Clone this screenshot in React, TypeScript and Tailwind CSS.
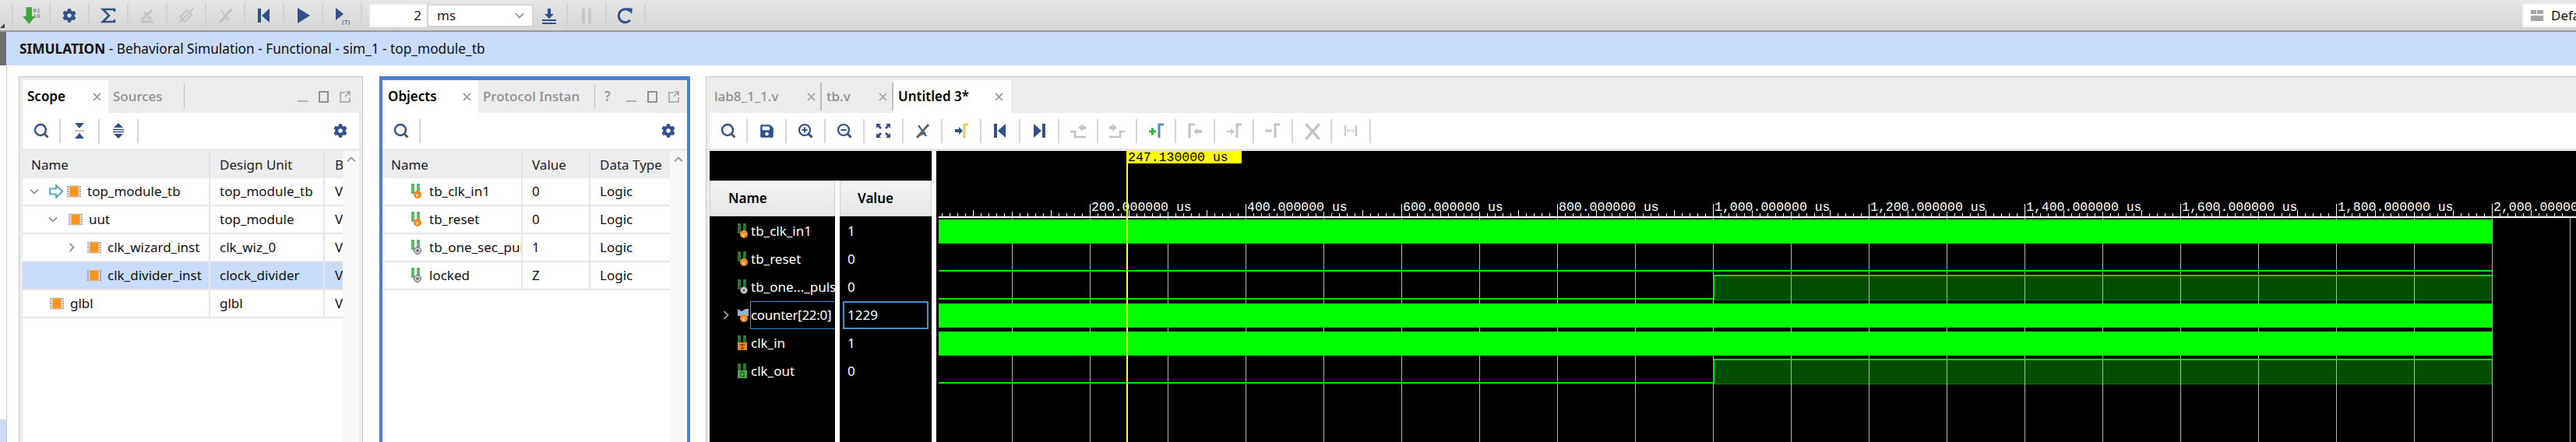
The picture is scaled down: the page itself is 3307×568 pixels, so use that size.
import * as React from "react"
import { FaCog, FaSave } from "react-icons/fa"

const NAVY = "#2f5187"
const GREY = "#c4c4c4"

const Svg = ({ size = 24, children }: { size?: number; children: React.ReactNode }) => (
  <svg width={size} height={size} viewBox="0 0 24 24" fill="none">
    {children}
  </svg>
)

const SearchIcon = () => (
  <Svg>
    <circle cx="11" cy="11" r="7" stroke={NAVY} strokeWidth="2.4" />
    <path d="M16 16l4.5 4.5" stroke="#555" strokeWidth="3" />
  </Svg>
)
const ZoomIcon = ({ plus }: { plus?: boolean }) => (
  <Svg>
    <circle cx="11" cy="11" r="7" stroke={NAVY} strokeWidth="2.2" />
    <path d={plus ? "M7.5 11h7M11 7.5v7" : "M7.5 11h7"} stroke={NAVY} strokeWidth="2" />
    <path d="M16 16l4.5 4.5" stroke={NAVY} strokeWidth="3" />
  </Svg>
)
const FitIcon = () => (
  <Svg>
    <path d="M3 3h6l-2 2 3 3-2 2-3-3-2 2zM21 3h-6l2 2-3 3 2 2 3-3 2 2zM3 21h6l-2-2 3-3-2-2-3 3-2-2zM21 21h-6l2-2-3-3 2-2 3 3 2-2z" fill={NAVY} />
  </Svg>
)
const SlashMarkerIcon = ({ color = NAVY, slash = "#666" }: { color?: string; slash?: string }) => (
  <Svg>
    <path d="M7 5l10 14M7 19l9-5" stroke={color} strokeWidth="2" />
    <path d="M5 21L20 4" stroke={slash} strokeWidth="3" />
  </Svg>
)
const PrevIcon = ({ flip }: { flip?: boolean }) => (
  <Svg>
    <g transform={flip ? "matrix(-1 0 0 1 24 0)" : undefined}>
      <rect x="4" y="3" width="4" height="18" fill={NAVY} />
      <path d="M19 3v18L9 12z" fill={NAVY} />
    </g>
  </Svg>
)
const PlayIcon = () => (
  <Svg>
    <path d="M5 2v20l16-10z" fill={NAVY} />
  </Svg>
)
const PlayTIcon = () => (
  <Svg>
    <path d="M4 2v16l10-8z" fill={NAVY} />
    <text x="12" y="23" fontSize="8" fill="#444" className="[font-family:'Liberation_Sans',sans-serif]">(T)</text>
  </Svg>
)
const SigmaIcon = () => (
  <Svg>
    <path d="M20 7V4H5l8 8-8 8h15v-3" stroke={NAVY} strokeWidth="2.6" />
  </Svg>
)
const RunLoadIcon = () => (
  <Svg size={26}>
    <path d="M6 2h7v11h4l-7.5 9L2 13h4z" fill="#3fa63f" />
    <text x="14" y="8" fontSize="7.5" fill="#666" className="[font-family:'Liberation_Mono',monospace]">01</text>
    <text x="14" y="15" fontSize="7.5" fill="#666" className="[font-family:'Liberation_Mono',monospace]">10</text>
  </Svg>
)
const WedgeIcon = () => (
  <Svg>
    <path d="M4 20h16M5 17L18 5M8 8l9 9" stroke={GREY} strokeWidth="3" />
  </Svg>
)
const PillIcon = () => (
  <Svg>
    <path d="M4 14l9-9 6 6-9 9z" stroke={GREY} strokeWidth="2" />
    <path d="M3 21L21 3" stroke={GREY} strokeWidth="2" />
  </Svg>
)
const CursorIcon = () => (
  <Svg>
    <path d="M4 10h5V7l5 5-5 5v-3H4z" fill={NAVY} />
    <path d="M21 4h-5v17" stroke="#e8ca62" strokeWidth="3" />
  </Svg>
)
const TransitionIcon = ({ flip }: { flip?: boolean }) => (
  <Svg>
    <g transform={flip ? "matrix(-1 0 0 1 24 0)" : undefined}>
      <path d="M2 13h6v7h14" stroke={GREY} strokeWidth="2.6" />
      <path d="M12 8l6-5v3h4v4h-4v3z" fill={GREY} />
    </g>
  </Svg>
)
const MarkerAddIcon = () => (
  <Svg>
    <path d="M3 13h9M7.5 8.5v9" stroke="#3fae49" strokeWidth="3" />
    <path d="M22 4h-6v17" stroke="#4a8ec2" strokeWidth="3" />
  </Svg>
)
const MarkerPrevIcon = () => (
  <Svg>
    <path d="M12 4H5v17" stroke={GREY} strokeWidth="3" />
    <path d="M10 13l5-4v2h6v4h-6v2z" fill={GREY} />
  </Svg>
)
const MarkerNextIcon = () => (
  <Svg>
    <path d="M3 12h5V9l5 4-5 4v-3H3z" fill={GREY} />
    <path d="M22 4h-6v17" stroke={GREY} strokeWidth="3" />
  </Svg>
)
const MarkerDelIcon = () => (
  <Svg>
    <path d="M2 12h9" stroke={GREY} strokeWidth="3" />
    <path d="M21 4h-6v17" stroke={GREY} strokeWidth="3" />
  </Svg>
)
const CrossIcon = () => (
  <Svg size={26}>
    <path d="M5 4l16 18M21 4L5 22" stroke={GREY} strokeWidth="3.2" />
  </Svg>
)
const SpanIcon = () => (
  <Svg>
    <path d="M5 5v14M19 5v14" stroke={GREY} strokeWidth="2" />
    <path d="M7 12h10M9 10l-2 2 2 2M15 10l2 2-2 2" stroke={GREY} strokeWidth="1" />
  </Svg>
)
const ExpandIcon = () => (
  <Svg>
    <path d="M6 2h12l-6 7zM12 15l6 7H6z" fill={NAVY} />
    <path d="M6 12h12" stroke={GREY} strokeWidth="2" />
  </Svg>
)
const CollapseIcon = () => (
  <Svg>
    <path d="M12 2l6 6H6zM6 16h12l-6 6z" fill={NAVY} />
    <path d="M5 10.5h14M5 13.5h14" stroke={NAVY} strokeWidth="1.6" />
  </Svg>
)
const RunAllIcon = () => (
  <Svg>
    <path d="M10 3h4v7h4l-6 6-6-6h4z" fill={NAVY} />
    <path d="M3 18h18M3 22h18" stroke={NAVY} strokeWidth="2" />
  </Svg>
)
const PauseIcon = () => (
  <Svg>
    <path d="M8 3v19M16 3v19" stroke={GREY} strokeWidth="3.5" />
  </Svg>
)
const RefreshIcon = () => (
  <Svg>
    <path d="M18 6.5A8.5 8.5 0 1 0 18 18" stroke={NAVY} strokeWidth="3" />
    <path d="M14 2l7 1-1 7z" fill={NAVY} />
  </Svg>
)
const LayoutIcon = () => (
  <svg width="16" height="14" viewBox="0 0 16 14">
    <path d="M0 0h7v5H0zM8 0h8v5H8zM0 7h16v7H0z" fill="#a6a6a6" />
  </svg>
)
const Chevron = ({ dir, className }: { dir: "up" | "down" | "right"; className?: string }) => (
  <svg width="14" height="14" viewBox="0 0 14 14" fill="none" className={className}>
    <path
      d={dir === "down" ? "M2 4.5l5 5 5-5" : dir === "up" ? "M2 9.5l5-5 5 5" : "M4.5 2l5 5-5 5"}
      stroke="#9a9a9a"
      strokeWidth="1.8"
    />
  </svg>
)
const ChipIcon = () => (
  <svg width="18" height="18" viewBox="0 0 18 18">
    <path d="M0 3h2M0 6h2M0 9h2M0 12h2M0 15h2M16 3h2M16 6h2M16 9h2M16 12h2M16 15h2" stroke="#555" strokeWidth="1" />
    <rect x="2" y="1" width="14" height="16" fill="#d9d9d9" />
    <rect x="3.5" y="2.5" width="11" height="13" fill="#f7941d" />
  </svg>
)
const ArrowIcon = () => (
  <svg width="18" height="18" viewBox="0 0 18 18">
    <path d="M1 5.5h8V1l8 8-8 8v-4.5H1z" fill="#fff" stroke="#5ba4c4" strokeWidth="2" />
  </svg>
)
const MinimiseIcon = () => <span className="mt-[12px] h-[2px] w-[13px] bg-[#b0b0b0]" />
const BoxIcon = () => <span className="h-[15px] w-[13px] border-2 border-[#8f8f8f]" />
const PopIcon = () => (
  <svg width="14" height="15" viewBox="0 0 14 15" fill="none">
    <path d="M7 2H1v12h12V8M8 1h5v5M13 1L7 7" stroke="#a0a0a0" strokeWidth="1.5" />
  </svg>
)

type SigKind = "in" | "plain" | "bus" | "clkin" | "clkout"

// little green wave plus the type badge in front of each signal
const SignalIcon = ({ kind }: { kind: SigKind }) => (
  <svg width="16" height="22" viewBox="0 0 16 22" fill="none">
    {kind === "bus" ? (
      <path d="M1 3l5 3 5-3 4 0v9H1z" fill="#8db8d8" />
    ) : (
      <path d="M2 14V2h2v12M9 14V2h2v10" stroke="#2f9e44" strokeWidth="1.5" />
    )}
    {kind === "in" || kind === "bus" ? (
      <>
        <circle cx="9" cy="15" r="5" fill="#f08a1d" />
        <text x="6.8" y="17.5" fontSize="7" fill="#fff" className="[font-family:'Liberation_Sans',sans-serif]">v</text>
      </>
    ) : null}
    {kind === "plain" ? (
      <>
        <circle cx="9" cy="15" r="4.5" fill="#c8c8c8" stroke="#666" />
        <circle cx="9" cy="15" r="1.5" fill="#555" />
      </>
    ) : null}
    {kind === "clkin" ? (
      <>
        <rect x="1" y="10" width="12" height="10" fill="#e8851c" />
        <path d="M4 13h6M7 13v5M5 18h4" stroke="#3d2a10" strokeWidth="1" />
      </>
    ) : null}
    {kind === "clkout" ? (
      <>
        <rect x="1" y="10" width="12" height="10" fill="#4aa84a" />
        <rect x="5" y="12.5" width="4" height="5" stroke="#1d4f1d" strokeWidth="1" />
      </>
    ) : null}
  </svg>
)

const ToolCell = ({ children, first, faint }: { children?: React.ReactNode; first?: boolean; faint?: boolean }) => (
  <div
    className={
      "flex h-[31px] w-[50px] shrink-0 items-center justify-center border-r-2 " +
      (faint ? "border-[#d2d2d2] " : "border-[#d6d6d6] ") +
      (first ? "border-l-2 " : "")
    }
  >
    {children}
  </div>
)

const treeRows = [
  { name: "top_module_tb", unit: "top_module_tb", pad: "pl-[8px]", chevron: "down" as const, arrow: true },
  { name: "uut", unit: "top_module", pad: "pl-[32px]", chevron: "down" as const },
  { name: "clk_wizard_inst", unit: "clk_wiz_0", pad: "pl-[56px]", chevron: "right" as const },
  { name: "clk_divider_inst", unit: "clock_divider", pad: "pl-[56px]", selected: true },
  { name: "glbl", unit: "glbl", pad: "pl-[8px]" },
]

const objectRows: { name: string; value: string; kind: SigKind }[] = [
  { name: "tb_clk_in1", value: "0", kind: "in" },
  { name: "tb_reset", value: "0", kind: "in" },
  { name: "tb_one_sec_pulse", value: "1", kind: "plain" },
  { name: "locked", value: "Z", kind: "plain" },
]

const waveRows: { name: string; value: string; kind: SigKind; chevron?: boolean; selected?: boolean }[] = [
  { name: "tb_clk_in1", value: "1", kind: "in" },
  { name: "tb_reset", value: "0", kind: "in" },
  { name: "tb_one..._pulse", value: "0", kind: "plain" },
  { name: "counter[22:0]", value: "1229", kind: "bus", chevron: true, selected: true },
  { name: "clk_in", value: "1", kind: "clkin" },
  { name: "clk_out", value: "0", kind: "clkout" },
]

const Tab = ({ children, active, className }: { children: React.ReactNode; active?: boolean; className?: string }) => (
  <div
    className={
      "flex h-full shrink-0 items-center text-[17px] " +
      (active ? "bg-white font-semibold text-black " : "font-medium text-[#8f8f8f] ") +
      (className ?? "")
    }
  >
    {children}
  </div>
)

const CloseX = ({ active }: { active?: boolean }) => (
  <svg width="11" height="11" viewBox="0 0 11 11" className="shrink-0">
    <path d="M1 1l9 9M10 1l-9 9" stroke={active ? "#8a8a8a" : "#9a9a9a"} strokeWidth="1.5" />
  </svg>
)

const HeadCell = ({ className, children }: { className: string; children: React.ReactNode }) => (
  <div className={"flex h-full items-center overflow-hidden whitespace-nowrap border-r-2 border-[#e2e2e2] " + className}>
    {children}
  </div>
)

const ScopePanel = () => (
  <section className="mt-[14px] flex w-[442px] shrink-0 flex-col border border-b-0 border-[#c8c8c8] bg-[#ececec] px-[4px] pt-[4px]">
    <div className="flex h-[42px] shrink-0 items-center">
      <Tab active className="w-[110px] justify-between pl-[6px] pr-[9px]">
        <span>Scope</span>
        <CloseX active />
      </Tab>
      <Tab className="w-[97px] pl-[6px]">Sources</Tab>
      <div className="h-[32px] w-[1px] bg-[#bdbdbd]" />
      <div className="ml-auto flex items-center gap-[14px] pr-[11px]">
        <MinimiseIcon />
        <BoxIcon />
        <PopIcon />
      </div>
    </div>
    <div className="flex h-[46px] shrink-0 items-center bg-white">
      <div className="flex h-[31px] w-[49px] items-center justify-center border-r-2 border-[#d6d6d6]"><SearchIcon /></div>
      <div className="flex h-[31px] w-[50px] items-center justify-center border-r-2 border-[#d6d6d6]"><ExpandIcon /></div>
      <div className="flex h-[31px] w-[50px] items-center justify-center border-r-2 border-[#d6d6d6]"><CollapseIcon /></div>
      <FaCog className="ml-auto mr-[15px]" size={18} color={NAVY} />
    </div>
    <div className="mt-[3px] flex min-h-0 flex-1 bg-white">
      <div className="w-[411px] overflow-hidden">
        <div className="flex h-[35px] bg-[#ededed] text-[17px] text-[#222]">
          <HeadCell className="w-[241px] shrink-0 pl-[11px]">Name</HeadCell>
          <HeadCell className="w-[147px] shrink-0 pl-[12px]">Design Unit</HeadCell>
          <div className="flex items-center pl-[13px]">B</div>
        </div>
        {treeRows.map((row) => (
          <div key={row.name} className={"flex h-[36px] border-b-2 border-[#e6e6e6] text-[17px] text-[#111] " + (row.selected ? "bg-[#c9dcfb]" : "")}>
            <div className="flex w-[241px] shrink-0 items-center border-r-2 border-[#e6e6e6]">
              <div className={"flex items-center " + row.pad}>
                <div className="flex w-[27px] shrink-0 items-center">
                  {row.chevron ? <Chevron dir={row.chevron} /> : null}
                </div>
                {row.arrow ? <span className="-ml-[1px] mr-[5px]"><ArrowIcon /></span> : null}
                <ChipIcon />
                <span className="ml-[8px] whitespace-nowrap">{row.name}</span>
              </div>
            </div>
            <div className="flex w-[147px] shrink-0 items-center whitespace-nowrap border-r-2 border-[#e6e6e6] pl-[12px]">{row.unit}</div>
            <div className="flex items-center pl-[13px]">V</div>
          </div>
        ))}
      </div>
      <div className="flex w-[21px] justify-center bg-[#f8f8f8] pt-[4px]"><Chevron dir="up" /></div>
    </div>
  </section>
)

const ObjectsPanel = () => (
  <section className="ml-[21px] mt-[14px] flex w-[399px] shrink-0 flex-col border-[4px] border-b-0 border-t-[5px] border-[#4a7fd1] bg-[#ececec]">
    <div className="flex h-[42px] shrink-0 items-center">
      <Tab active className="w-[123px] justify-between pl-[7px] pr-[9px]">
        <span>Objects</span>
        <CloseX active />
      </Tab>
      <Tab className="w-[149px] overflow-hidden whitespace-nowrap pl-[6px]">Protocol Instan</Tab>
      <div className="h-[32px] w-[1px] bg-[#bdbdbd]" />
      <span className="ml-[12px] text-[17px] font-semibold text-[#9a9a9a]">?</span>
      <div className="ml-auto flex items-center gap-[14px] pr-[10px]">
        <MinimiseIcon />
        <BoxIcon />
        <PopIcon />
      </div>
    </div>
    <div className="flex h-[46px] shrink-0 items-center bg-white">
      <div className="flex h-[31px] w-[49px] items-center justify-center border-r-2 border-[#d6d6d6]"><SearchIcon /></div>
      <FaCog className="ml-auto mr-[15px]" size={18} color={NAVY} />
    </div>
    <div className="mt-[3px] flex min-h-0 flex-1 bg-white">
      <div className="w-[369px] overflow-hidden">
        <div className="flex h-[35px] bg-[#ededed] text-[17px] text-[#222]">
          <HeadCell className="w-[180px] shrink-0 pl-[11px]">Name</HeadCell>
          <HeadCell className="w-[87px] shrink-0 pl-[12px]">Value</HeadCell>
          <div className="flex items-center whitespace-nowrap pl-[12px]">Data Type</div>
        </div>
        {objectRows.map((row) => (
          <div key={row.name} className="flex h-[36px] border-b-2 border-[#e6e6e6] text-[17px] text-[#111]">
            <div className="flex w-[180px] shrink-0 items-center overflow-hidden whitespace-nowrap border-r-2 border-[#e6e6e6] pl-[36px]">
              <span className="w-[24px] shrink-0"><SignalIcon kind={row.kind} /></span>
              {row.name}
            </div>
            <div className="flex w-[87px] shrink-0 items-center border-r-2 border-[#e6e6e6] pl-[12px]">{row.value}</div>
            <div className="flex items-center pl-[12px]">Logic</div>
          </div>
        ))}
      </div>
      <div className="flex w-[21px] justify-center bg-[#f8f8f8] pt-[4px]"><Chevron dir="up" /></div>
    </div>
  </section>
)

const WaveCanvas = () => {
  // canvas starts at x=1202, y=194 of the page: everything below is in canvas coords
  const W = 2105
  const H = 374
  const x0 = 3
  const end = 1997
  const grid = Array.from({ length: 21 }, (_, i) => 97 + i * 100)
  const ticks = Array.from({ length: 210 }, (_, i) => -3 + i * 10).filter((x) => x > 2)
  const labels = [
    [197, "200.000000 us"],
    [397, "400.000000 us"],
    [597, "600.000000 us"],
    [797, "800.000000 us"],
    [997, "1,000.000000 us"],
    [1197, "1,200.000000 us"],
    [1397, "1,400.000000 us"],
    [1597, "1,600.000000 us"],
    [1797, "1,800.000000 us"],
    [1997, "2,000.000000 us"],
  ] as const
  return (
    <svg width={W} height={H} viewBox={`0 0 ${W} ${H}`} className="block bg-black" shapeRendering="crispEdges">
      {/* dark "high" bars sit under the grid, the lines show through them */}
      <rect x="998" y="160" width={end - 998} height="31" fill="#034d03" stroke="#007a00" />
      <rect x="998" y="268" width={end - 998} height="31" fill="#034d03" stroke="#007a00" />
      {grid.map((x) => (
        <line key={x} x1={x + 0.5} y1="84" x2={x + 0.5} y2={H} stroke="#b4b4b4" />
      ))}
      <rect x={x0} y="84" width={W} height="2" fill="#fff" />
      {ticks.map((x) => {
        const h = (x + 3) % 100 === 0 ? 6 : (x + 3) % 50 === 0 ? 8 : 4
        return <line key={x} x1={x + 0.5} y1={84 - h} x2={x + 0.5} y2="84" stroke="#fff" />
      })}
      {labels.map(([x, text]) => (
        <g key={text}>
          <line x1={x + 0.5} y1="68" x2={x + 0.5} y2="84" stroke="#fff" />
          <text x={x + 2} y="77" fill="#fff" className="text-[16.5px] [font-family:'Liberation_Mono',monospace]" shapeRendering="auto">
            {text}
          </text>
        </g>
      ))}
      <rect x={x0} y="88" width={end - x0} height="31" fill="#00ff00" />
      <rect x={x0} y="196" width={end - x0} height="31" fill="#00ff00" />
      <rect x={x0} y="232" width={end - x0} height="31" fill="#00ff00" />
      <rect x={x0} y="153" width={end - x0} height="2" fill="#00e800" />
      <rect x={x0} y="189" width={998 - x0} height="2" fill="#00e800" />
      <rect x="997" y="159" width={end - 997} height="2" fill="#00e800" />
      <rect x="997" y="159" width="2" height="32" fill="#00e800" />
      <rect x={x0} y="297" width={998 - x0} height="2" fill="#00e800" />
      <rect x="997" y="267" width={end - 997} height="2" fill="#00e800" />
      <rect x="997" y="267" width="2" height="32" fill="#00e800" />
      <rect x="244" y="0" width="2" height={H} fill="#ffff00" />
      <rect x="245" y="0" width="147" height="16" fill="#ffff00" />
      <text x="246" y="13" fill="#000" className="text-[16.5px] [font-family:'Liberation_Mono',monospace]" shapeRendering="auto">
        247.130000 us
      </text>
    </svg>
  )
}

const EditorPanel = () => (
  <section className="ml-[20px] mt-[14px] flex min-w-0 flex-1 flex-col border-l border-t border-[#c8c8c8] bg-[#ececec] pl-[4px] pt-[4px]">
    <div className="flex h-[42px] shrink-0 items-center">
      <Tab className="w-[142px] justify-between pl-[6px] pr-[6px]">
        <span>lab8_1_1.v</span>
        <CloseX />
      </Tab>
      <div className="h-[36px] w-[2px] bg-[#bdbdbd]" />
      <Tab className="w-[90px] justify-between pl-[6px] pr-[6px]">
        <span>tb.v</span>
        <CloseX />
      </Tab>
      <div className="h-[36px] w-[2px] bg-[#bdbdbd]" />
      <Tab active className="w-[151px] justify-between pl-[6px] pr-[10px]">
        <span>Untitled 3*</span>
        <CloseX active />
      </Tab>
    </div>
    <div className="flex h-[46px] shrink-0 items-center bg-white">
      <div className="flex h-[31px] w-[49px] shrink-0 items-center justify-center border-r-2 border-[#d6d6d6]"><SearchIcon /></div>
      <ToolCell><FaSave size={19} color={NAVY} /></ToolCell>
      <ToolCell><ZoomIcon plus /></ToolCell>
      <ToolCell><ZoomIcon /></ToolCell>
      <ToolCell><FitIcon /></ToolCell>
      <ToolCell><SlashMarkerIcon /></ToolCell>
      <ToolCell><CursorIcon /></ToolCell>
      <ToolCell><PrevIcon /></ToolCell>
      <ToolCell><PrevIcon flip /></ToolCell>
      <ToolCell><TransitionIcon /></ToolCell>
      <ToolCell><TransitionIcon flip /></ToolCell>
      <ToolCell><MarkerAddIcon /></ToolCell>
      <ToolCell><MarkerPrevIcon /></ToolCell>
      <ToolCell><MarkerNextIcon /></ToolCell>
      <ToolCell><MarkerDelIcon /></ToolCell>
      <ToolCell><CrossIcon /></ToolCell>
      <ToolCell><SpanIcon /></ToolCell>
    </div>
    <div className="h-[3px] shrink-0 bg-[#e6e6e6]" />
    <div className="flex min-h-0 flex-1 bg-white">
      <div className="flex w-[285px] shrink-0 flex-col">
        <div className="h-[38px] shrink-0 bg-black" />
        <div className="flex h-[46px] shrink-0 justify-between bg-white text-[17px] font-semibold text-black">
          <div className="flex w-[161px] items-center border border-[#cfcfcf] bg-gradient-to-b from-[#f3f3f3] to-[#e6e6e6] pl-[23px]">Name</div>
          <div className="flex w-[118px] items-center border border-[#cfcfcf] bg-gradient-to-b from-[#f3f3f3] to-[#e6e6e6] pl-[22px]">Value</div>
        </div>
        <div className="flex flex-1 justify-between text-[17px] text-white">
          <div className="w-[161px] overflow-hidden bg-black pt-[1px]">
            {waveRows.map((row) => (
              <div key={row.name} className="flex h-[36px] items-center whitespace-nowrap">
                <div className="flex w-[35px] shrink-0 justify-end pr-[7px]">
                  {row.chevron ? <Chevron dir="right" /> : null}
                </div>
                <span className="w-[17px] shrink-0"><SignalIcon kind={row.kind} /></span>
                <span className={row.selected ? "flex h-[36px] flex-1 items-center border border-r-0 border-[#3c8fd0] tracking-[-0.3px]" : "pl-[1px]"}>{row.name}</span>
              </div>
            ))}
          </div>
          <div className="w-[118px] bg-black pt-[1px]">
            {waveRows.map((row) => (
              <div key={row.name} className="flex h-[36px] items-center">
                <span className={row.selected ? "ml-[4px] flex h-[36px] w-[110px] items-center border-2 border-[#4a90c8] pl-[4px]" : "pl-[10px]"}>{row.value}</span>
              </div>
            ))}
          </div>
        </div>
      </div>
      <div className="ml-[6px] min-w-0 flex-1 overflow-hidden"><WaveCanvas /></div>
    </div>
  </section>
)

export default function App() {
  return (
    <div className="flex h-[568px] w-[3307px] flex-col overflow-hidden bg-white [font-family:'Noto_Sans',sans-serif]">
      {/* main toolbar */}
      <header className="relative flex h-[41px] shrink-0 items-center border-b-2 border-[#9a9a9a] bg-gradient-to-b from-[#e6e6e6] to-[#d6d6d6] pl-[15px]">
        <span className="absolute bottom-[3px] left-0 h-0 w-0 border-b-[6px] border-l-[6px] border-b-[#444] border-l-transparent" />
        <ToolCell first faint><RunLoadIcon /></ToolCell>
        <ToolCell faint><FaCog size={18} color={NAVY} /></ToolCell>
        <ToolCell faint><SigmaIcon /></ToolCell>
        <ToolCell faint><WedgeIcon /></ToolCell>
        <ToolCell faint><PillIcon /></ToolCell>
        <ToolCell faint><SlashMarkerIcon color={GREY} slash={GREY} /></ToolCell>
        <ToolCell faint><PrevIcon /></ToolCell>
        <ToolCell faint><PlayIcon /></ToolCell>
        <ToolCell faint><PlayTIcon /></ToolCell>
        <div className="ml-[9px] flex h-[30px] w-[74px] shrink-0 items-center justify-end border-2 border-[#f4f4f4] bg-white pr-[5px] text-[17px] text-[#222]">2</div>
        <div className="ml-[2px] flex h-[26px] w-[133px] shrink-0 items-center justify-between bg-white pl-[11px] pr-[9px] text-[17px] text-[#222] shadow-[0_0_0_1px_#cfcfcf]">
          <span>ms</span>
          <Chevron dir="down" />
        </div>
        <div className="flex h-[31px] w-[46px] shrink-0 items-center justify-center border-r-2 border-[#d2d2d2]"><RunAllIcon /></div>
        <ToolCell faint><PauseIcon /></ToolCell>
        <ToolCell faint><RefreshIcon /></ToolCell>
        <div className="ml-auto flex h-[31px] w-[69px] shrink-0 items-center gap-[10px] overflow-hidden border-2 border-r-0 border-[#f2f2f2] bg-white pl-[9px] text-[17px] text-[#111]">
          <span className="shrink-0"><LayoutIcon /></span>
          <span>Default</span>
        </div>
      </header>

      {/* flow banner */}
      <div className="flex h-[43px] shrink-0">
        <div className="w-[8px] shrink-0 bg-[#6e6e6e]" />
        <div className="flex flex-1 items-center bg-[#c9dcfb] pl-[17px] text-[17.25px] text-[#111]">
          <span className="font-bold">SIMULATION</span>
          <span className="whitespace-pre"> - Behavioral Simulation - Functional - sim_1 - top_module_tb</span>
        </div>
      </div>

      <div className="flex min-h-0 flex-1">
        <div className="flex w-[9px] shrink-0 flex-col border-r border-[#c8c8c8]">
          <div className="flex-1" />
          <div className="h-[29px] bg-[#c9dcfb]" />
        </div>
        <div className="ml-[15px] flex min-w-0 flex-1">
          <ScopePanel />
          <ObjectsPanel />
          <EditorPanel />
        </div>
      </div>
    </div>
  )
}
